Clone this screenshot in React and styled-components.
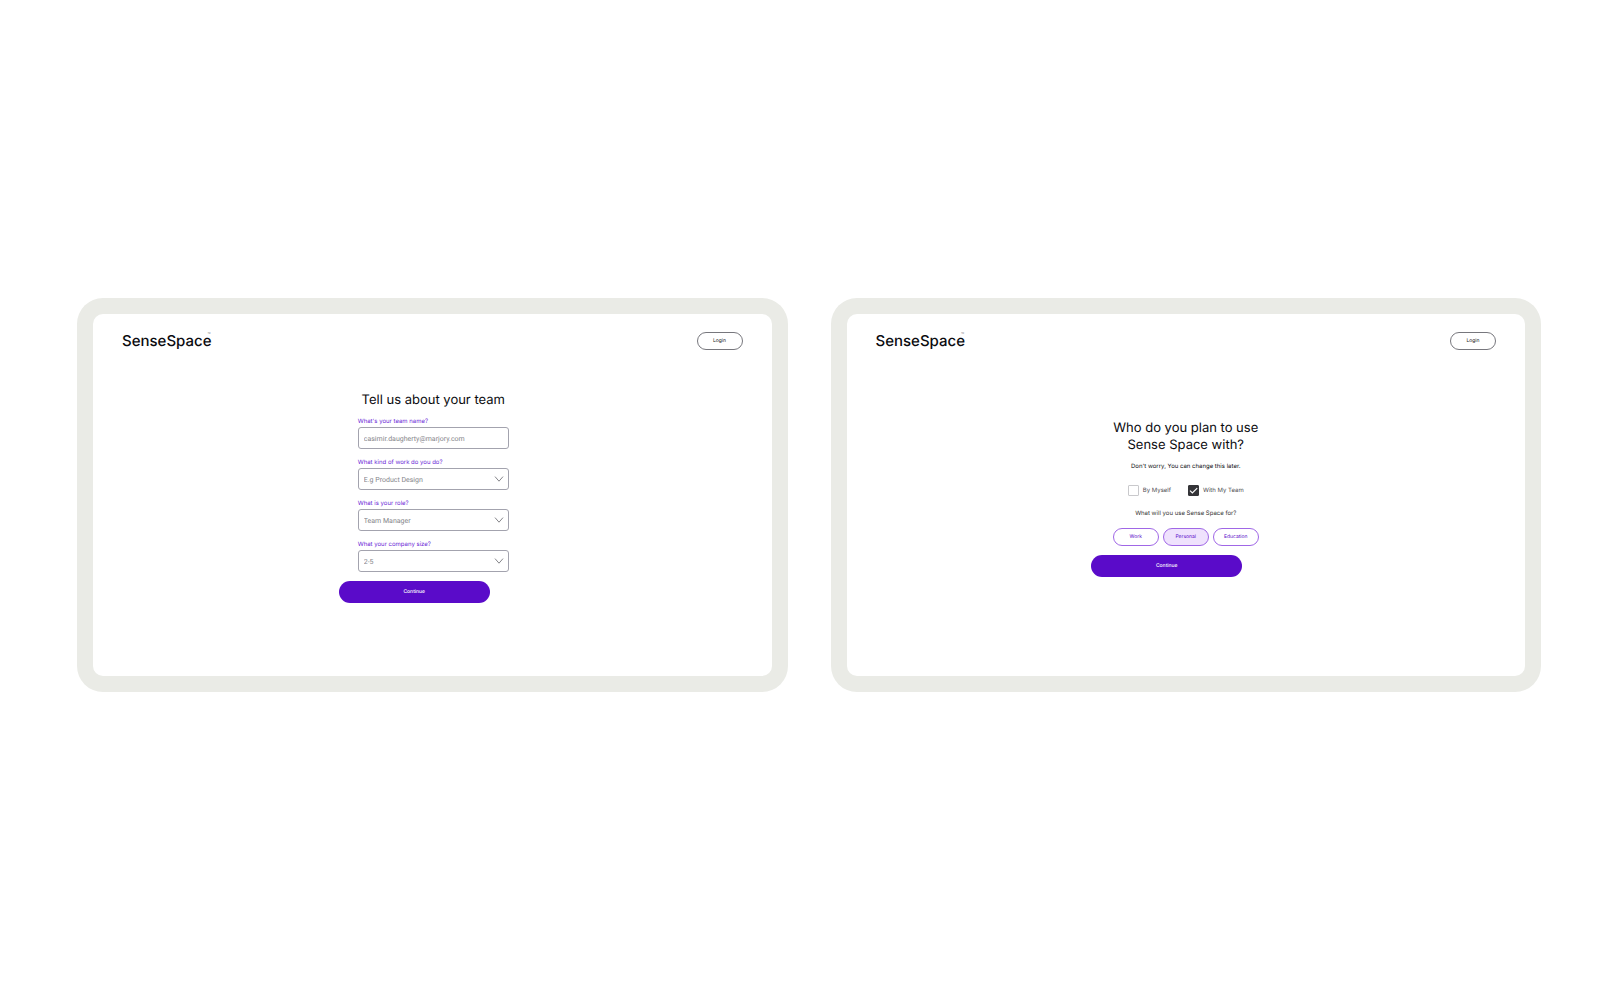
import React, { useState } from "react";
import { styled, createGlobalStyle } from "styled-components";

const ROLES = ["Team Manager", "Designer", "Developer"];
const WORK_KINDS = ["E.g Product Design", "Engineering", "Marketing"];
const SIZES = ["2-5", "6-10", "11-50"];
const PURPOSES = ["Work", "Personal", "Education"];

const Header = () => {
  return (
    <TopBar>
      <Logo href="#">
        SenseSpace<sup>™</sup>
      </Logo>
      <LoginButton type="button">Login</LoginButton>
    </TopBar>
  );
};

const SelectField = ({ id, label, options }) => {
  return (
    <Field>
      <Label htmlFor={id}>{label}</Label>
      <SelectWrapper>
        <Select id={id}>
          {options.map((it) => (
            <option key={it}>{it}</option>
          ))}
        </Select>
        <Chevron viewBox="0 0 10 6" aria-hidden="true">
          <path d="M1 0.6 L5 5.2 L9 0.6" />
        </Chevron>
      </SelectWrapper>
    </Field>
  );
};

const TeamScreen = () => {
  return (
    <Frame>
      <Screen>
        <Header />
        <TeamForm onSubmit={(e) => e.preventDefault()}>
          <Title>Tell us about your team</Title>
          <Fields>
            <Field>
              <Label htmlFor="team-name">What's your team name?</Label>
              <Input
                id="team-name"
                type="text"
                placeholder="casimir.daugherty@marjory.com"
              />
            </Field>
            <SelectField
              id="work-kind"
              label="What kind of work do you do?"
              options={WORK_KINDS}
            />
            <SelectField
              id="role"
              label="What is your role?"
              options={ROLES}
            />
            <SelectField
              id="company-size"
              label="What your company size?"
              options={SIZES}
            />
          </Fields>
          <ContinueButton type="submit">Continue</ContinueButton>
        </TeamForm>
      </Screen>
    </Frame>
  );
};

const PlanScreen = () => {
  const [company, setCompany] = useState("team");
  const [purpose, setPurpose] = useState("Personal");

  return (
    <Frame>
      <Screen>
        <Header />
        <PlanForm onSubmit={(e) => e.preventDefault()}>
          <Title>
            Who do you plan to use
            <br />
            Sense Space with?
          </Title>
          <Hint>Don't worry, You can change this later.</Hint>
          <Checks>
            <CheckLabel>
              <Checkbox
                checked={company === "myself"}
                onChange={() => setCompany("myself")}
              />
              By Myself
            </CheckLabel>
            <CheckLabel>
              <Checkbox
                checked={company === "team"}
                onChange={() => setCompany("team")}
              />
              With My Team
            </CheckLabel>
          </Checks>
          <Question>What will you use Sense Space for?</Question>
          <Pills>
            {PURPOSES.map((it) => (
              <Pill
                key={it}
                type="button"
                $active={it === purpose}
                onClick={() => setPurpose(it)}
              >
                {it}
              </Pill>
            ))}
          </Pills>
          <ContinueButton type="submit">Continue</ContinueButton>
        </PlanForm>
      </Screen>
    </Frame>
  );
};

const Checkbox = ({ checked, onChange }) => {
  return (
    <CheckBox $checked={checked}>
      <input type="checkbox" checked={checked} onChange={onChange} />
      {checked && (
        <svg viewBox="0 0 11 11" aria-hidden="true">
          <path d="M2 5.6 L4.4 8 L9.2 3.2" />
        </svg>
      )}
    </CheckBox>
  );
};

export default function App() {
  return (
    <>
      <GlobalStyle />
      <Page>
        <TeamScreen />
        <PlanScreen />
      </Page>
    </>
  );
}

const GlobalStyle = createGlobalStyle`
  * {
    box-sizing: border-box;
  }
  body {
    margin: 0;
    background: #fff;
    color: #0b0b0f;
    font-family: Inter, "Liberation Sans", sans-serif;
    text-rendering: geometricPrecision;
  }
  button, input, select {
    font-family: inherit;
    text-rendering: inherit;
    margin: 0;
  }
  button {
    cursor: pointer;
  }
`;

const Page = styled.main`
  min-height: 100vh;
  display: grid;
  grid-template-columns: repeat(auto-fit, minmax(480px, 1fr));
  align-content: center;
  gap: 43px;
  padding: 2px 78px 0 77px;
`;

const Frame = styled.section`
  padding: 16px;
  border-radius: 26px;
  background: #eaebe6;
`;

const Screen = styled.div`
  aspect-ratio: 15 / 8;
  border-radius: 10px;
  background: #fff;
`;

const TopBar = styled.header`
  display: flex;
  justify-content: space-between;
  align-items: center;
  padding: 18px 29px 0;
`;

const Logo = styled.a`
  color: #0b0b0f;
  font-size: 15px;
  font-weight: 500;
  line-height: 18px;
  text-decoration: none;
  display: flex;
  sup {
    margin-left: -4px;
    color: #77777d;
    font-size: 5px;
    font-weight: 400;
    line-height: 6px;
  }
`;

const LoginButton = styled.button`
  width: 46px;
  height: 18px;
  padding: 0;
  border: 1px solid #77777d;
  border-radius: 9px;
  background: #fff;
  color: #222;
  font-size: 5px;
`;

const TeamForm = styled.form`
  display: flex;
  flex-direction: column;
  align-items: center;
  padding: 42px 0 0 2px;
`;

const PlanForm = styled(TeamForm)`
  padding: 70px 0 0;
`;

const Title = styled.h1`
  margin: 0;
  font-size: 13px;
  font-weight: 400;
  line-height: 17px;
  text-align: center;
`;

const Fields = styled.div`
  display: flex;
  flex-direction: column;
  gap: 10px;
  width: 151px;
  margin-top: 9px;
`;

const Field = styled.div`
  display: flex;
  flex-direction: column;
  gap: 1px;
`;

const Label = styled.label`
  color: #6a1fd6;
  font-size: 6px;
  line-height: 8px;
`;

const Input = styled.input`
  width: 100%;
  height: 22px;
  padding: 2px 5px 0;
  border: 1px solid #a3a3ae;
  border-radius: 3px;
  background: #fff;
  color: #85858a;
  font-family: Roboto, "Liberation Sans", sans-serif;
  font-size: 7px;
  &::placeholder {
    color: #85858a;
  }
`;

const SelectWrapper = styled.div`
  display: grid;
  align-items: center;
  > * {
    grid-area: 1 / 1;
  }
`;

const Select = styled(Input).attrs({ as: "select" })`
  appearance: none;
`;

const Chevron = styled.svg`
  width: 10px;
  height: 6px;
  margin-right: 5px;
  justify-self: end;
  pointer-events: none;
  path {
    fill: none;
    stroke: #66666c;
    stroke-width: 0.8;
  }
`;

const ContinueButton = styled.button`
  width: 151px;
  height: 22px;
  margin: 9px 38px 0 0;
  padding: 0;
  border: none;
  border-radius: 11px;
  background: #5a0bc9;
  color: #fff;
  font-size: 5px;
  font-weight: 500;
`;

const Hint = styled.p`
  margin: 9px 0 0;
  font-size: 6px;
  line-height: 8px;
`;

const Checks = styled.div`
  display: flex;
  gap: 17px;
  margin-top: 14px;
`;

const CheckLabel = styled.label`
  display: flex;
  align-items: center;
  gap: 4px;
  color: #4c4c50;
  font-size: 6px;
  line-height: 8px;
`;

const CheckBox = styled.span`
  display: grid;
  width: 11px;
  height: 11px;
  > * {
    grid-area: 1 / 1;
  }
  input {
    appearance: none;
    width: 11px;
    height: 11px;
    margin: 0;
    border: 1px solid ${({ $checked }) => ($checked ? "#343438" : "#c9c9cc")};
    border-radius: 1px;
    background: ${({ $checked }) => ($checked ? "#343438" : "#fff")};
  }
  svg {
    pointer-events: none;
  }
  path {
    fill: none;
    stroke: #fff;
    stroke-width: 1.2;
  }
`;

const Question = styled(Hint)`
  margin-top: 14px;
  color: #333;
`;

const Pills = styled.div`
  display: flex;
  gap: 4px;
  margin-top: 10px;
`;

const Pill = styled.button`
  width: 46px;
  height: 18px;
  padding: 0;
  border: 1px solid #a067e6;
  border-radius: 9px;
  background: ${({ $active }) => ($active ? "#efe2fd" : "#fff")};
  color: #5a0bc9;
  font-size: 5px;
`;
